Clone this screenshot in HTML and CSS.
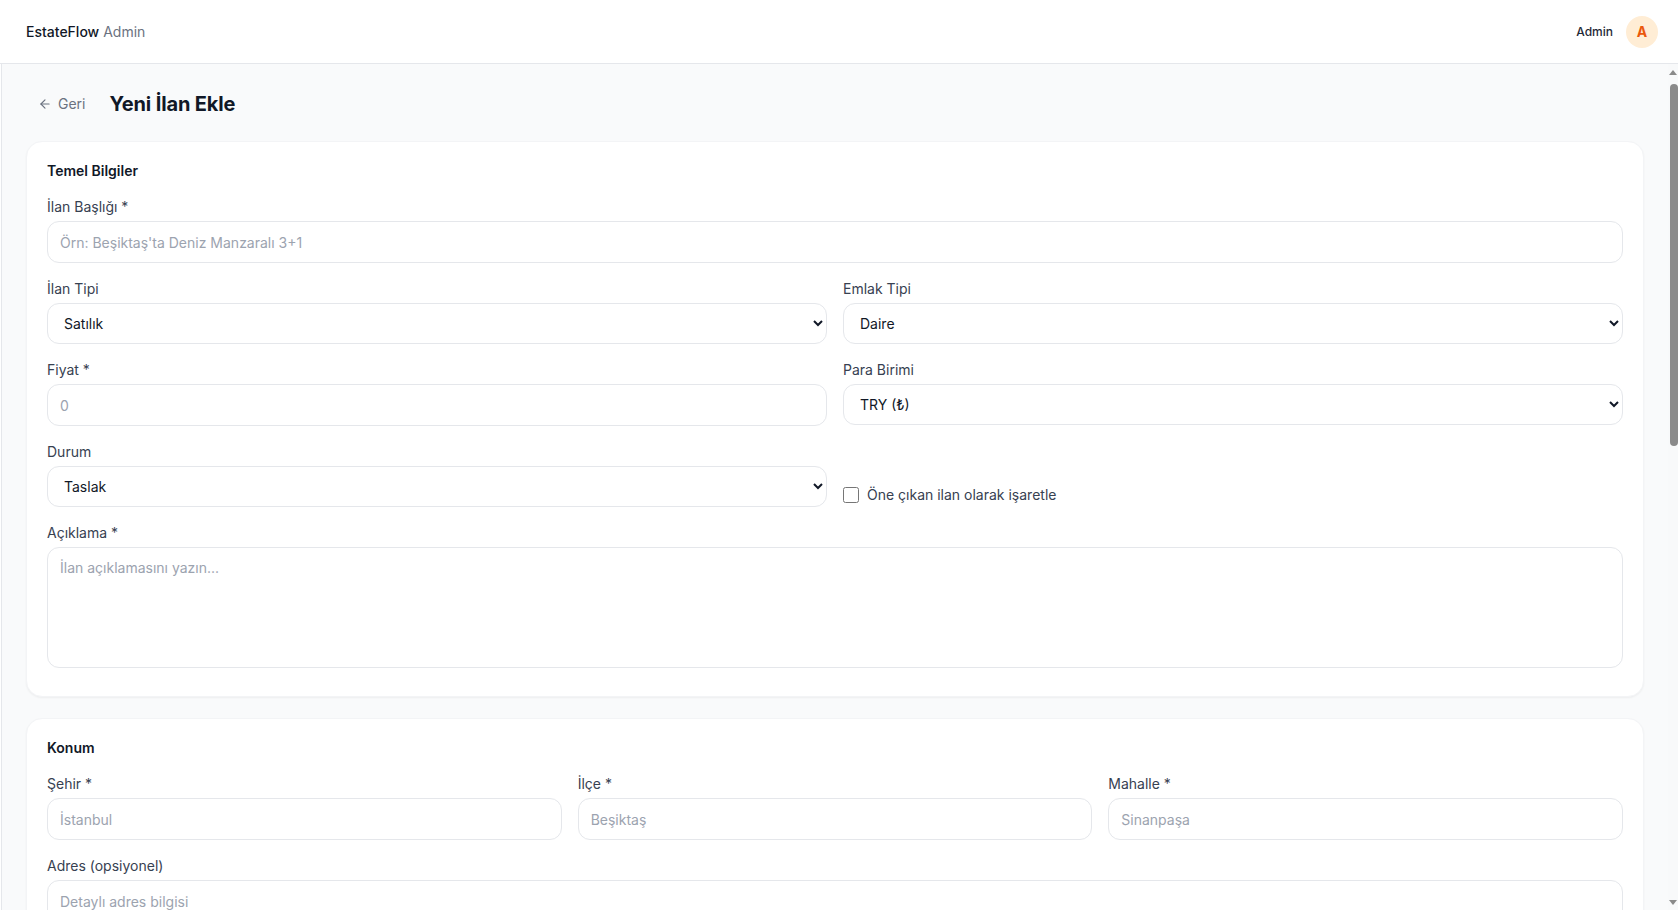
FILE: index.html
```html
<!DOCTYPE html>
<html lang="tr">
<head>
<meta charset="utf-8">
<title>Yeni İlan Ekle · EstateFlow Admin</title>
<link rel="stylesheet" href="styles.css">
</head>
<body>
<header class="topbar">
  <div class="brand"><span class="brand-name">EstateFlow</span> <span class="brand-sub">Admin</span></div>
  <div class="user">
    <span class="user-name">Admin</span>
    <span class="avatar">A</span>
  </div>
</header>

<main class="main">
  <div class="scroller">
    <div class="page">
      <div class="page-head">
        <a class="back" href="#">
          <svg class="back-icon" viewBox="0 0 24 24" width="14" height="14" fill="none" stroke="currentColor" stroke-width="2" stroke-linecap="round" stroke-linejoin="round"><path d="M12 19l-7-7 7-7"/><path d="M19 12H5"/></svg>
          Geri
        </a>
        <h1 class="page-title">Yeni İlan Ekle</h1>
      </div>

      <form class="form">
        <section class="card">
          <h2 class="card-title">Temel Bilgiler</h2>

          <div class="field">
            <label class="label">İlan Başlığı *</label>
            <input class="control" type="text" placeholder="Örn: Beşiktaş'ta Deniz Manzaralı 3+1">
          </div>

          <div class="grid-2">
            <div class="field">
              <label class="label">İlan Tipi</label>
              <select class="control select">
                <option>Satılık</option>
                <option>Kiralık</option>
              </select>
            </div>
            <div class="field">
              <label class="label">Emlak Tipi</label>
              <select class="control select">
                <option>Daire</option>
                <option>Villa</option>
                <option>Arsa</option>
              </select>
            </div>
          </div>

          <div class="grid-2">
            <div class="field">
              <label class="label">Fiyat *</label>
              <input class="control" type="number" placeholder="0">
            </div>
            <div class="field">
              <label class="label">Para Birimi</label>
              <select class="control select">
                <option>TRY (₺)</option>
                <option>USD ($)</option>
                <option>EUR (€)</option>
              </select>
            </div>
          </div>

          <div class="grid-2">
            <div class="field">
              <label class="label">Durum</label>
              <select class="control select">
                <option>Taslak</option>
                <option>Yayında</option>
              </select>
            </div>
            <label class="check">
              <input class="check-box" type="checkbox">
              <span>Öne çıkan ilan olarak işaretle</span>
            </label>
          </div>

          <div class="field">
            <label class="label">Açıklama *</label>
            <textarea class="control textarea" rows="5" placeholder="İlan açıklamasını yazın..."></textarea>
          </div>
        </section>

        <section class="card">
          <h2 class="card-title">Konum</h2>
          <div class="grid-3">
            <div class="field">
              <label class="label">Şehir *</label>
              <input class="control" type="text" placeholder="İstanbul">
            </div>
            <div class="field">
              <label class="label">İlçe *</label>
              <input class="control" type="text" placeholder="Beşiktaş">
            </div>
            <div class="field">
              <label class="label">Mahalle *</label>
              <input class="control" type="text" placeholder="Sinanpaşa">
            </div>
          </div>
          <div class="field">
            <label class="label">Adres (opsiyonel)</label>
            <input class="control" type="text" placeholder="Detaylı adres bilgisi">
          </div>
        </section>

        <section class="card">
          <h2 class="card-title">Özellikler</h2>
          <div class="grid-4">
            <div class="field">
              <label class="label">Oda Sayısı</label>
              <input class="control" type="text" placeholder="3+1">
            </div>
            <div class="field">
              <label class="label">Banyo Sayısı</label>
              <input class="control" type="number" placeholder="1">
            </div>
            <div class="field">
              <label class="label">Brüt m²</label>
              <input class="control" type="number" placeholder="120">
            </div>
            <div class="field">
              <label class="label">Net m²</label>
              <input class="control" type="number" placeholder="100">
            </div>
          </div>
          <div class="grid-4">
            <div class="field">
              <label class="label">Bulunduğu Kat</label>
              <input class="control" type="number" placeholder="2">
            </div>
            <div class="field">
              <label class="label">Kat Sayısı</label>
              <input class="control" type="number" placeholder="5">
            </div>
            <div class="field">
              <label class="label">Bina Yaşı</label>
              <input class="control" type="number" placeholder="0">
            </div>
            <div class="field">
              <label class="label">Isıtma</label>
              <select class="control select">
                <option>Kombi</option>
                <option>Merkezi</option>
                <option>Yerden Isıtma</option>
              </select>
            </div>
          </div>
        </section>

        <section class="card">
          <h2 class="card-title">Ek Özellikler</h2>
          <div class="grid-4 checks">
            <label class="check"><input class="check-box" type="checkbox"><span>Balkon</span></label>
            <label class="check"><input class="check-box" type="checkbox"><span>Asansör</span></label>
            <label class="check"><input class="check-box" type="checkbox"><span>Otopark</span></label>
            <label class="check"><input class="check-box" type="checkbox"><span>Eşyalı</span></label>
            <label class="check"><input class="check-box" type="checkbox"><span>Site İçerisinde</span></label>
            <label class="check"><input class="check-box" type="checkbox"><span>Havuz</span></label>
            <label class="check"><input class="check-box" type="checkbox"><span>Güvenlik</span></label>
            <label class="check"><input class="check-box" type="checkbox"><span>Krediye Uygun</span></label>
          </div>
        </section>

        <section class="card">
          <h2 class="card-title">Görseller</h2>
          <div class="upload">
            <span class="upload-text">Görselleri sürükleyip bırakın veya seçmek için tıklayın</span>
            <span class="upload-hint">PNG, JPG · en fazla 10 MB</span>
          </div>
        </section>

        <section class="card">
          <h2 class="card-title">Danışman</h2>
          <div class="grid-2">
            <div class="field">
              <label class="label">Sorumlu Danışman</label>
              <select class="control select">
                <option>Seçiniz</option>
              </select>
            </div>
            <div class="field">
              <label class="label">İletişim Telefonu</label>
              <input class="control" type="tel" placeholder="0 (5xx) xxx xx xx">
            </div>
          </div>
        </section>

        <div class="actions">
          <button class="btn btn-ghost" type="button">İptal</button>
          <button class="btn btn-primary" type="submit">İlanı Kaydet</button>
        </div>
      </form>
    </div>
  </div>

  <div class="scroll-rail" aria-hidden="true">
    <span class="rail-btn rail-up"></span>
    <div class="rail-track">
      <span class="rail-thumb"></span>
    </div>
    <span class="rail-btn rail-down"></span>
  </div>
</main>
</body>
</html>
```

FILE: styles.css
```css
* {
  box-sizing: border-box;
}

html,
body {
  height: 100%;
}

body {
  margin: 0;
  display: flex;
  flex-direction: column;
  overflow: hidden;
  font-family: Inter, "Noto Sans", "Liberation Sans", sans-serif;
  font-size: 14px;
  line-height: 20px;
  color: #111827;
  background: #ffffff;
}

/* top bar */
.topbar {
  flex: 0 0 auto;
  height: 64px;
  display: flex;
  align-items: center;
  justify-content: space-between;
  padding: 0 20px 0 26px;
  background: #ffffff;
  border-bottom: 1px solid #e5e7eb;
}

.brand {
  font-size: 14px;
}

.brand-name {
  font-weight: 500;
  color: #111827;
}

.brand-sub {
  color: #6b7280;
}

.user {
  display: flex;
  align-items: center;
  gap: 13px;
}

.user-name {
  font-size: 12px;
  font-weight: 500;
  color: #1f2937;
}

.avatar {
  width: 32px;
  height: 32px;
  border-radius: 50%;
  background: #ffedd5;
  color: #ea580c;
  font-weight: 700;
  font-size: 14px;
  display: flex;
  align-items: center;
  justify-content: center;
}

/* content area: scrolling column plus its rail */
.main {
  flex: 1 1 auto;
  min-height: 0;
  display: flex;
  background: #f9fafb;
  border-left: 1px solid #e5e7eb;
  margin-left: 1px;
}

.scroller {
  flex: 1 1 auto;
  min-width: 0;
  overflow-y: auto;
  scrollbar-width: none;
}

.scroll-rail {
  flex: 0 0 10px;
  display: flex;
  flex-direction: column;
  background: #f8f9fa;
}

.rail-btn {
  flex: 0 0 16px;
  display: flex;
  align-items: center;
  justify-content: center;
}

.rail-btn::before {
  content: "";
  width: 0;
  height: 0;
  border-left: 4px solid transparent;
  border-right: 4px solid transparent;
}

.rail-up::before {
  border-bottom: 5px solid #8a8a8a;
}

.rail-down::before {
  border-top: 5px solid #8a8a8a;
}

.rail-track {
  flex: 1 1 auto;
  padding: 4px 0 0 2px;
}

.rail-thumb {
  display: block;
  width: 8px;
  height: 362px;
  border-radius: 4px;
  background: #8a8a8a;
}

.page {
  padding: 24px 24px 48px;
}

.page-head {
  display: flex;
  align-items: center;
  gap: 24px;
  height: 32px;
  margin-bottom: 21px;
  padding-left: 12px;
}

.back {
  display: flex;
  align-items: center;
  gap: 6px;
  color: #6b7280;
  text-decoration: none;
  font-size: 14px;
}

.back-icon {
  display: block;
}

.page-title {
  margin: 0;
  font-size: 20px;
  line-height: 28px;
  font-weight: 700;
  letter-spacing: -0.15px;
  color: #111827;
}

.form {
  display: flex;
  flex-direction: column;
  gap: 21px;
}

/* cards */
.card {
  background: #ffffff;
  border: 1px solid #f3f4f6;
  border-radius: 16px;
  box-shadow: 0 1px 2px rgba(0, 0, 0, 0.05);
  padding: 19px 20px 28px;
  display: flex;
  flex-direction: column;
  gap: 16px;
}

.card-title {
  margin: 0;
  font-size: 14px;
  line-height: 20px;
  font-weight: 600;
  color: #111827;
}

.field {
  display: flex;
  flex-direction: column;
  gap: 4px;
  min-width: 0;
}

.label {
  font-size: 14px;
  line-height: 20px;
  color: #374151;
}

.control {
  width: 100%;
  height: 42px;
  padding: 0 12px;
  border: 1px solid #e5e7eb;
  border-radius: 12px;
  background: #ffffff;
  font-family: inherit;
  font-size: 14px;
  color: #111827;
  outline: none;
}

.control::placeholder {
  color: #9ca3af;
}

.select {
  height: 41px;
  padding: 0 12px;
}

.textarea {
  height: 121px;
  padding: 10px 12px;
  resize: none;
  line-height: 20px;
  display: block;
}

.grid-2 {
  display: grid;
  grid-template-columns: 1fr 1fr;
  gap: 16px;
}

.grid-3 {
  display: grid;
  grid-template-columns: repeat(3, 1fr);
  gap: 16px;
}

.grid-4 {
  display: grid;
  grid-template-columns: repeat(4, 1fr);
  gap: 16px;
}

.checks {
  row-gap: 12px;
}

.check {
  align-self: end;
  display: flex;
  align-items: center;
  gap: 8px;
  margin-bottom: 2px;
  color: #374151;
  font-size: 14px;
}

.checks .check {
  margin-bottom: 0;
}

.check-box {
  margin: 0;
  width: 16px;
  height: 16px;
}

.upload {
  height: 200px;
  border: 2px dashed #e5e7eb;
  border-radius: 12px;
  display: flex;
  flex-direction: column;
  align-items: center;
  justify-content: center;
  gap: 4px;
}

.upload-text {
  color: #4b5563;
}

.upload-hint {
  font-size: 12px;
  color: #9ca3af;
}

.actions {
  display: flex;
  justify-content: flex-end;
  gap: 12px;
}

.btn {
  height: 40px;
  padding: 0 20px;
  border-radius: 12px;
  font-family: inherit;
  font-size: 14px;
  font-weight: 500;
  cursor: pointer;
}

.btn-ghost {
  background: #ffffff;
  border: 1px solid #e5e7eb;
  color: #374151;
}

.btn-primary {
  background: #ea580c;
  border: 1px solid #ea580c;
  color: #ffffff;
}
```
